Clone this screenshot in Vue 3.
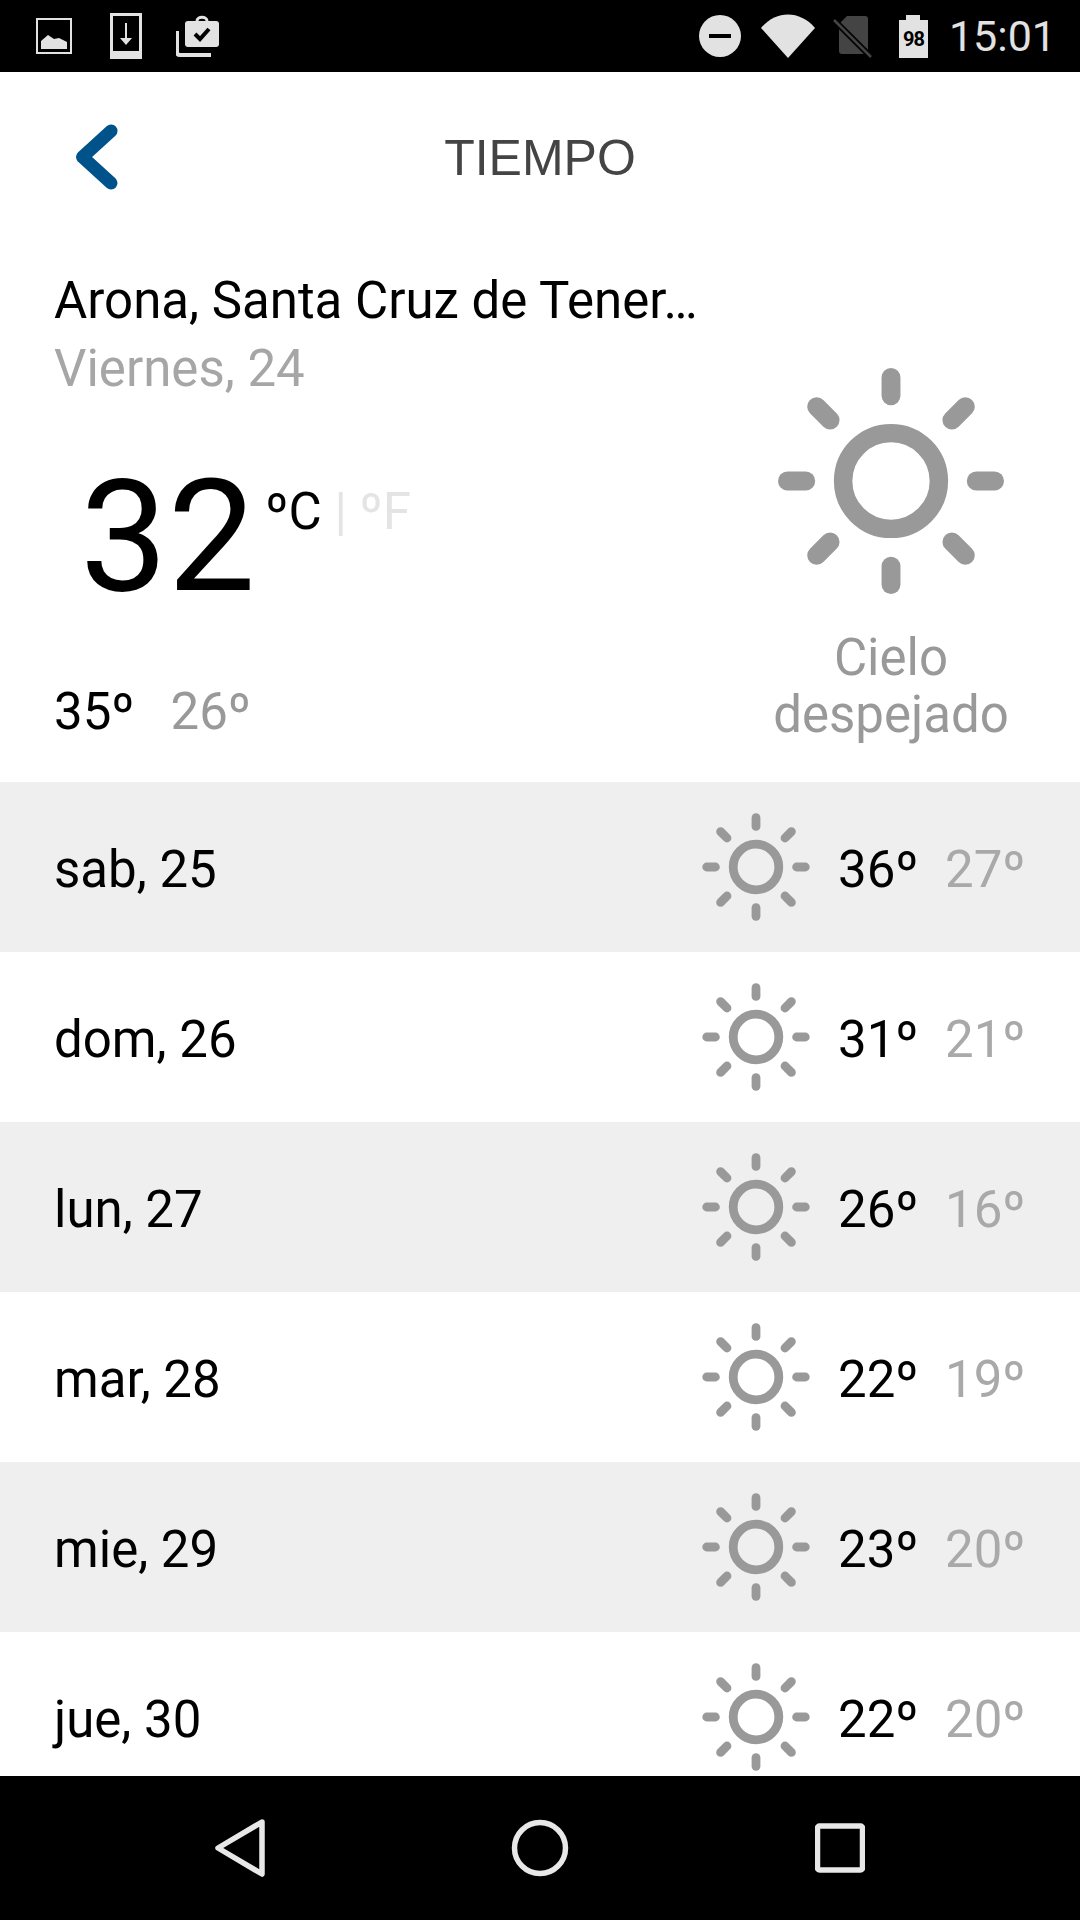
<script setup>
const days = [
  { label: 'sab, 25', max: 36, min: 27 },
  { label: 'dom, 26', max: 31, min: 21 },
  { label: 'lun, 27', max: 26, min: 16 },
  { label: 'mar, 28', max: 22, min: 19 },
  { label: 'mie, 29', max: 23, min: 20 },
  { label: 'jue, 30', max: 22, min: 20 }
]

// rayos del sol, mismo dibujo para el grande y los pequeños
const rays = [
  [0, -40.6, 0, -49.3],
  [0, 40.6, 0, 49.3],
  [-40.6, 0, -49.3, 0],
  [40.6, 0, 49.3, 0],
  [-29, -29, -35.4, -35.4],
  [29, -29, 35.4, -35.4],
  [-29, 29, -35.4, 35.4],
  [29, 29, 35.4, 35.4]
]
</script>

<template>
  <div class="screen">
    <!-- Barra de estado -->
    <div class="status-bar">
      <div class="status-left">
        <svg class="ic-image" viewBox="0 0 36 36" width="36" height="36">
          <rect x="1" y="1" width="34" height="34" fill="none" stroke="#e2e2e2" stroke-width="2" />
          <path d="M5 31V23L12 17L18 21L23 20L31 24V31Z" fill="#e2e2e2" />
        </svg>
        <svg class="ic-download" viewBox="0 0 32 46" width="32" height="46">
          <path d="M0 0H32V46H0ZM3 3V38H29V3Z" fill="#e2e2e2" fill-rule="evenodd" />
          <path d="M16 10V26" stroke="#e2e2e2" stroke-width="2" />
          <path d="M10 25H22L16 32Z" fill="#e2e2e2" />
        </svg>
        <svg class="ic-case" viewBox="0 0 44 42" width="44" height="42">
          <path d="M1 16V37C1 39 2 40 4 40H35" fill="none" stroke="#e2e2e2" stroke-width="4" />
          <rect x="9" y="6" width="34" height="26" rx="3" fill="#e2e2e2" />
          <path d="M21 6C21 1 31 1 31 6" fill="none" stroke="#e2e2e2" stroke-width="3" />
          <path d="M19 19L24 24L33 14" fill="none" stroke="#000" stroke-width="4" />
        </svg>
      </div>
      <div class="status-right">
        <svg class="ic-dnd" viewBox="0 0 42 42" width="42" height="42">
          <circle cx="21" cy="21" r="21" fill="#e2e2e2" />
          <rect x="10" y="19" width="22" height="4" fill="#000" />
        </svg>
        <svg class="ic-wifi" viewBox="0 0 54 44" width="54" height="44">
          <path d="M0 14C15 -4 39 -4 54 14L27 44Z" fill="#e2e2e2" />
        </svg>
        <svg class="ic-sim" viewBox="0 0 40 44" width="40" height="44">
          <path d="M6 10L14 2H32C34 2 35 3 35 5V40H9C7 40 6 39 6 37Z" fill="#444" />
          <path d="M1 6L38 43" stroke="#000" stroke-width="6" />
          <path d="M1 6L38 43" stroke="#444" stroke-width="2.5" />
        </svg>
        <div class="battery">
          <div class="battery-cap"></div>
          <div class="battery-body">98</div>
        </div>
        <span class="clock">15:01</span>
      </div>
    </div>

    <div class="content">
      <!-- Cabecera -->
      <div class="header">
        <svg class="back" viewBox="0 0 44 66" width="44" height="66">
          <path d="M37 7L8.5 33L37 59" fill="none" stroke="#00538a" stroke-width="13" stroke-linecap="round" stroke-linejoin="round" />
        </svg>
        <h1 class="title">TIEMPO</h1>
      </div>

      <!-- Hoy -->
      <div class="today">
        <div class="today-left">
          <div class="place">Arona, Santa Cruz de Tener…</div>
          <div class="date">Viernes, 24</div>
          <div class="current">
            <span class="current-value">32</span>
            <span class="unit">ºC <span class="unit-off">| ºF</span></span>
          </div>
          <div class="today-range">
            <span class="hi">35º</span>
            <span class="lo">26º</span>
          </div>
        </div>
        <div class="today-right">
          <svg class="sun-big" viewBox="-60 -60 120 120">
            <circle r="22.8" fill="none" stroke="#999" stroke-width="8.8" />
            <line v-for="(r, i) in rays" :key="i" :x1="r[0]" :y1="r[1]" :x2="r[2]" :y2="r[3]" stroke="#999" stroke-width="9" stroke-linecap="round" />
          </svg>
          <div class="sky">Cielo despejado</div>
        </div>
      </div>

      <!-- Prevision -->
      <div class="forecast">
        <div v-for="day in days" :key="day.label" class="row">
          <span class="row-label">{{ day.label }}</span>
          <svg class="sun" viewBox="-60 -60 120 120">
            <circle r="22.8" fill="none" stroke="#999" stroke-width="8.8" />
            <line v-for="(r, i) in rays" :key="i" :x1="r[0]" :y1="r[1]" :x2="r[2]" :y2="r[3]" stroke="#999" stroke-width="8.8" stroke-linecap="round" />
          </svg>
          <span class="row-hi">{{ day.max }}º</span>
          <span class="row-lo">{{ day.min }}º</span>
        </div>
      </div>
    </div>

    <!-- Barra de navegacion -->
    <div class="nav-bar">
      <svg viewBox="0 0 56 60" width="56" height="60">
        <path d="M50 4L6 30L50 56Z" fill="none" stroke="#e8e8e8" stroke-width="5.5" stroke-linejoin="round" />
      </svg>
      <svg class="nav-home" viewBox="0 0 60 60" width="60" height="60">
        <circle cx="30" cy="30" r="25.5" fill="none" stroke="#e8e8e8" stroke-width="5.5" />
      </svg>
      <svg viewBox="0 0 50 50" width="50" height="50">
        <rect x="2.5" y="3" width="45" height="44" rx="2" fill="none" stroke="#e8e8e8" stroke-width="5.5" />
      </svg>
    </div>
  </div>
</template>

<style scoped>
.screen {
  width: 1080px;
  height: 1920px;
  display: flex;
  flex-direction: column;
  background: #fff;
  font-family: Roboto, "Liberation Sans", sans-serif;
  overflow: hidden;
}

.status-bar {
  height: 72px;
  flex: none;
  background: #000;
  display: flex;
  align-items: center;
  justify-content: space-between;
  padding: 0 24px 0 36px;
}

.status-left,
.status-right {
  display: flex;
  align-items: center;
}

.ic-image {
  margin-right: 38px;
}

.ic-download {
  margin-right: 34px;
}

.ic-dnd {
  margin-right: 20px;
}

.ic-wifi {
  margin-right: 18px;
}

.ic-sim {
  margin-right: 26px;
}

.battery {
  width: 29px;
  margin-right: 21px;
  display: flex;
  flex-direction: column;
  align-items: center;
}

.battery-cap {
  width: 14px;
  height: 5px;
  background: #e2e2e2;
}

.battery-body {
  width: 29px;
  height: 38px;
  background: #e2e2e2;
  color: #000;
  font-size: 20px;
  font-weight: 700;
  line-height: 38px;
  text-align: center;
  letter-spacing: -1px;
}

.clock {
  color: #e2e2e2;
  font-size: 43px;
}

.content {
  flex: 1;
  overflow: hidden;
}

.header {
  height: 172px;
  position: relative;
  display: flex;
  align-items: center;
  justify-content: center;
}

.back {
  position: absolute;
  left: 74px;
  top: 52px;
}

.title {
  margin: 0;
  font-family: "Liberation Sans", Arial, sans-serif;
  font-size: 50px;
  font-weight: 400;
  color: #444;
}

.today {
  height: 538px;
  display: flex;
  justify-content: space-between;
}

.today-left {
  width: 680px;
  padding-left: 54px;
  display: flex;
  flex-direction: column;
}

.place {
  font-size: 51px;
  line-height: 68px;
  margin-top: 23px;
  color: #000;
  white-space: nowrap;
}

.date {
  font-size: 51px;
  line-height: 68px;
  color: #a6a6a6;
}

.current {
  display: flex;
  align-items: flex-start;
  padding-left: 26px;
  margin-top: 39px;
  height: 190px;
}

.current-value {
  font-size: 156px;
  line-height: 190px;
  color: #000;
}

.unit {
  font-size: 51px;
  line-height: 60px;
  margin-top: 40px;
  margin-left: 10px;
  color: #000;
}

.unit-off {
  color: #e4e4e4;
}

.today-range {
  display: flex;
  gap: 36px;
  font-size: 51px;
  line-height: 60px;
  margin-top: 50px;
}

.hi {
  color: #000;
}

.lo {
  color: #999;
}

.today-right {
  width: 300px;
  margin-right: 39px;
  display: flex;
  flex-direction: column;
  align-items: center;
  padding-top: 111px;
}

.sun-big {
  width: 252px;
  height: 252px;
}

.sky {
  width: 260px;
  margin-top: 22px;
  text-align: center;
  font-size: 51px;
  line-height: 57px;
  color: #999;
}

.row {
  height: 170px;
  display: flex;
  align-items: center;
  padding: 0 54px;
}

.row:nth-child(odd) {
  background: #efefef;
}

.row-label {
  flex: 1;
  font-size: 51px;
  margin-top: 5px;
  color: #000;
}

.sun {
  width: 120px;
  height: 120px;
}

.row-hi {
  width: 96px;
  margin-left: 22px;
  margin-top: 5px;
  font-size: 51px;
  color: #000;
}

.row-lo {
  width: 81px;
  margin-left: 11px;
  margin-top: 5px;
  font-size: 51px;
  color: #a9a9a9;
}

.nav-bar {
  height: 144px;
  flex: none;
  background: #000;
  display: flex;
  align-items: center;
  justify-content: space-between;
  padding: 0 215px 0 212px;
}

.nav-home {
  margin-left: -4px;
}
</style>
